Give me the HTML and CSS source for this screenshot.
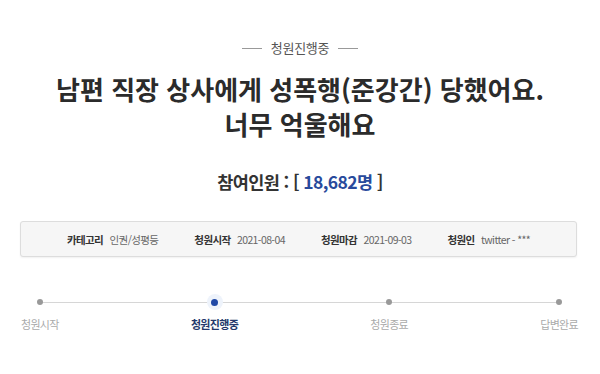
FILE: index.html
```html
<!DOCTYPE html>
<html lang="ko">
<head>
    <meta charset="UTF-8">
    <meta name="viewport" content="width=device-width, initial-scale=1.0">
    <title>청원진행중</title>
    <link rel="stylesheet" href="styles.css">
</head>
<body>
    <div class="petition">
        <p class="status"><span class="dash"></span>청원진행중<span class="dash"></span></p>

        <h3 class="title">남편 직장 상사에게 성폭행(준강간) 당했어요.<br>너무 억울해요</h3>

        <h2 class="count">참여인원 : [ <span class="num">18,682명</span> ]</h2>

        <ul class="info">
            <li><b>카테고리</b> 인권/성평등</li>
            <li><b>청원시작</b> 2021-08-04</li>
            <li><b>청원마감</b> 2021-09-03</li>
            <li><b>청원인</b> twitter - ***</li>
        </ul>

        <ol class="steps">
            <li><span class="dot"></span><span class="label">청원시작</span></li>
            <li class="on"><span class="dot"></span><span class="label">청원진행중</span></li>
            <li><span class="dot"></span><span class="label">청원종료</span></li>
            <li><span class="dot"></span><span class="label">답변완료</span></li>
        </ol>
    </div>
</body>
</html>
```

FILE: styles.css
```css
body {
    font-family: "Noto Sans CJK KR", "Noto Sans", sans-serif;
    background-color: #fff;
    color: #333;
    margin: 0;
    padding: 0;
}

.petition {
    padding-top: 38px;
}

/* top status label */
.status {
    display: flex;
    justify-content: center;
    align-items: center;
    gap: 9px;
    margin: 0;
    font-size: 13px;
    line-height: 20px;
    color: #555;
    letter-spacing: -0.3px;
}

.status .dash {
    display: block;
    width: 20px;
    height: 1px;
    background: #999;
}

.title {
    margin: 13px 0 0;
    text-align: center;
    font-size: 26px;
    line-height: 35px;
    font-weight: bold;
    color: #2b2b2b;
    letter-spacing: 0;
}

.count {
    margin: 28px 0 0;
    text-align: center;
    font-size: 17.5px;
    line-height: 26px;
    font-weight: bold;
    color: #333;
    letter-spacing: -0.6px;
}

.count .num {
    color: #284a9c;
}

/* info box */
.info {
    list-style: none;
    display: flex;
    justify-content: center;
    align-items: center;
    gap: 36px;
    height: 34px;
    margin: 26px 23px 0 20px;
    padding: 0;
    background: #f6f6f6;
    border: 1px solid #ddd;
    border-radius: 3px;
    box-shadow: 0 1px 2px rgba(0, 0, 0, 0.06);
    font-size: 10.5px;
    color: #666;
    letter-spacing: -0.6px;
}

.info b {
    color: #333;
    margin-right: 4px;
}

/* progress steps */
.steps {
    list-style: none;
    position: relative;
    display: flex;
    justify-content: space-between;
    margin: 37px 22px 0 21px;
    padding: 0;
}

.steps::before {
    content: "";
    position: absolute;
    top: 8px;
    left: 18px;
    right: 19px;
    height: 1px;
    background: #d6d6d6;
}

.steps li {
    display: flex;
    flex-direction: column;
    align-items: center;
    gap: 6px;
}

.steps .dot {
    position: relative;
    display: flex;
    align-items: center;
    justify-content: center;
    width: 16px;
    height: 16px;
    border-radius: 50%;
}

.steps .dot::after {
    content: "";
    width: 6px;
    height: 6px;
    border-radius: 50%;
    background: #999;
}

.steps .on .dot {
    background: #eef3fb;
}

.steps .on .dot::after {
    width: 7px;
    height: 7px;
    background: #1f48a6;
}

.steps .label {
    font-size: 11px;
    line-height: 16px;
    color: #aaa;
    letter-spacing: -0.7px;
}

.steps .on .label {
    font-weight: bold;
    color: #24396b;
}
```
